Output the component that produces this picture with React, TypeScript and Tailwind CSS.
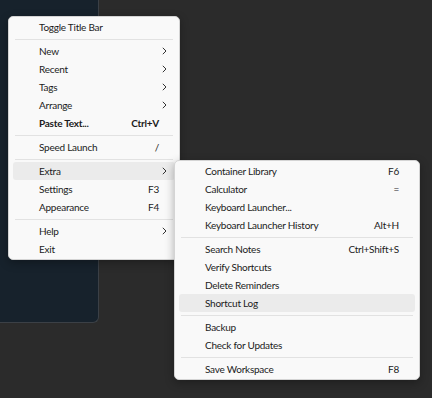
import React from 'react';

type Item =
    | { kind: 'sep' }
    | { kind: 'item'; label: string; shortcut?: string; sub?: boolean; bold?: boolean; active?: boolean };

const sep: Item = { kind: 'sep' };
const it = (label: string, extra: Partial<Omit<Extract<Item, { kind: 'item' }>, 'kind' | 'label'>> = {}): Item => ({ kind: 'item', label, ...extra });

const mainItems: Item[] = [
    it('Toggle Title Bar'),
    sep,
    it('New', { sub: true }),
    it('Recent', { sub: true }),
    it('Tags', { sub: true }),
    it('Arrange', { sub: true }),
    it('Paste Text...', { shortcut: 'Ctrl+V', bold: true }),
    sep,
    it('Speed Launch', { shortcut: '/' }),
    sep,
    it('Extra', { sub: true, active: true }),
    it('Settings', { shortcut: 'F3' }),
    it('Appearance', { shortcut: 'F4' }),
    sep,
    it('Help', { sub: true }),
    it('Exit'),
];

const extraItems: Item[] = [
    it('Container Library', { shortcut: 'F6' }),
    it('Calculator', { shortcut: '=' }),
    it('Keyboard Launcher...'),
    it('Keyboard Launcher History', { shortcut: 'Alt+H' }),
    sep,
    it('Search Notes', { shortcut: 'Ctrl+Shift+S' }),
    it('Verify Shortcuts'),
    it('Delete Reminders'),
    it('Shortcut Log', { active: true }),
    sep,
    it('Backup'),
    it('Check for Updates'),
    sep,
    it('Save Workspace', { shortcut: 'F8' }),
];

function Chevron() {
    return (
        <svg width="5" height="8" viewBox="0 0 5 8" fill="none" stroke="#333" strokeWidth="1">
            <path d="M0.8 0.8 L4 4 L0.8 7.2" />
        </svg>
    );
}

function Menu({ items, className }: { items: Item[]; className: string }) {
    return (
        <div className={`absolute bg-[#f9f9f9] border border-[#d4d4d4] rounded-[5px] shadow-[0_3px_10px_rgba(0,0,0,0.3)] py-[1px] ${className}`}>
            {items.map((item, i) =>
                item.kind === 'sep' ? (
                    <div key={i} className="h-[6px] flex items-center px-[6px]">
                        <div className="h-px w-full bg-[#e2e2e2]" />
                    </div>
                ) : (
                    <div
                        key={i}
                        className={`h-[18px] mx-[4px] rounded-[3px] flex items-center pl-[26px] pr-[8px] text-[#1b1b1b] ${item.active ? 'bg-[#ebebeb]' : ''}`}
                    >
                        <span className={`flex-1 whitespace-nowrap ${item.bold ? 'font-bold' : ''}`}>{item.label}</span>
                        {item.shortcut && (
                            <span className={`mr-[8px] whitespace-nowrap ${item.bold ? 'font-bold' : ''}`}>{item.shortcut}</span>
                        )}
                        {item.sub && <Chevron />}
                    </div>
                )
            )}
        </div>
    );
}

export default function App() {
    return (
        <div className="relative w-[432px] h-[398px] bg-[#2b2b2b] overflow-hidden text-[10px] tracking-[-0.25px] leading-none [font-family:Lato,'Noto_Sans',sans-serif]">
            <div className="w-[99px] h-[323px] bg-[#17222c] border-r border-b border-[#3b4046] rounded-br-[6px]" />
            <Menu items={mainItems} className="left-[8px] top-[16px] w-[172px]" />
            <Menu items={extraItems} className="left-[174px] top-[160px] w-[246px]" />
        </div>
    );
}
